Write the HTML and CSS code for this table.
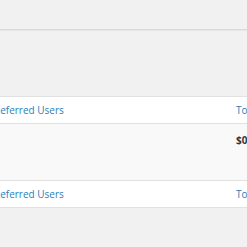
FILE: index.html
```html
<!DOCTYPE html>
<html lang="en">
<head>
    <meta charset="UTF-8">
    <meta name="viewport" content="width=device-width, initial-scale=1.0">
    <title>Referrals</title>
    <link rel="stylesheet" href="styles.css">
</head>
<body>
    <div class="topbar"></div>
    <div class="content">
        <table class="list-table">
            <thead>
                <tr>
                    <th class="col-users"><a href="#">Referred Users</a></th>
                    <th class="col-total"><a href="#">Total Earnings</a></th>
                </tr>
            </thead>
            <tbody>
                <tr>
                    <td class="col-users"></td>
                    <td class="col-total"><strong>$0.00</strong></td>
                </tr>
            </tbody>
            <tfoot>
                <tr>
                    <th class="col-users"><a href="#">Referred Users</a></th>
                    <th class="col-total"><a href="#">Total Earnings</a></th>
                </tr>
            </tfoot>
        </table>
    </div>
</body>
</html>
```

FILE: styles.css
```css
body {
    margin: 0;
    font-family: 'Open Sans', sans-serif;
    font-size: 10px;
    background-color: #f1f1f1;
    color: #32373c;
    overflow: hidden;
}

.topbar {
    height: 29px;
    border-bottom: 1px solid #d9d9d9;
    box-shadow: 0 1px 0 #e6e6e6;
}

.content {
    padding-top: 66px;
}

.list-table {
    width: 330px;
    margin-left: -17px;
    border: 1px solid #e1e1e1;
    border-spacing: 0;
    background: #fff;
    box-shadow: 0 1px 1px rgba(0, 0, 0, 0.04);
    white-space: nowrap;
}

.list-table th {
    height: 26px;
    padding: 0 10px;
    text-align: left;
    font-weight: 400;
    line-height: 14px;
    vertical-align: middle;
}

.list-table thead th {
    border-bottom: 1px solid #e1e1e1;
}

.list-table tfoot th {
    border-top: 1px solid #e1e1e1;
}

.list-table th a {
    color: #2a7fba;
    text-decoration: none;
}

.list-table td {
    height: 56px;
    padding: 0 10px;
    background: #f9f9f9;
    vertical-align: top;
    line-height: 14px;
}

.list-table td strong {
    display: block;
    padding-top: 9px;
}

.col-users {
    width: 224px;
}
```
